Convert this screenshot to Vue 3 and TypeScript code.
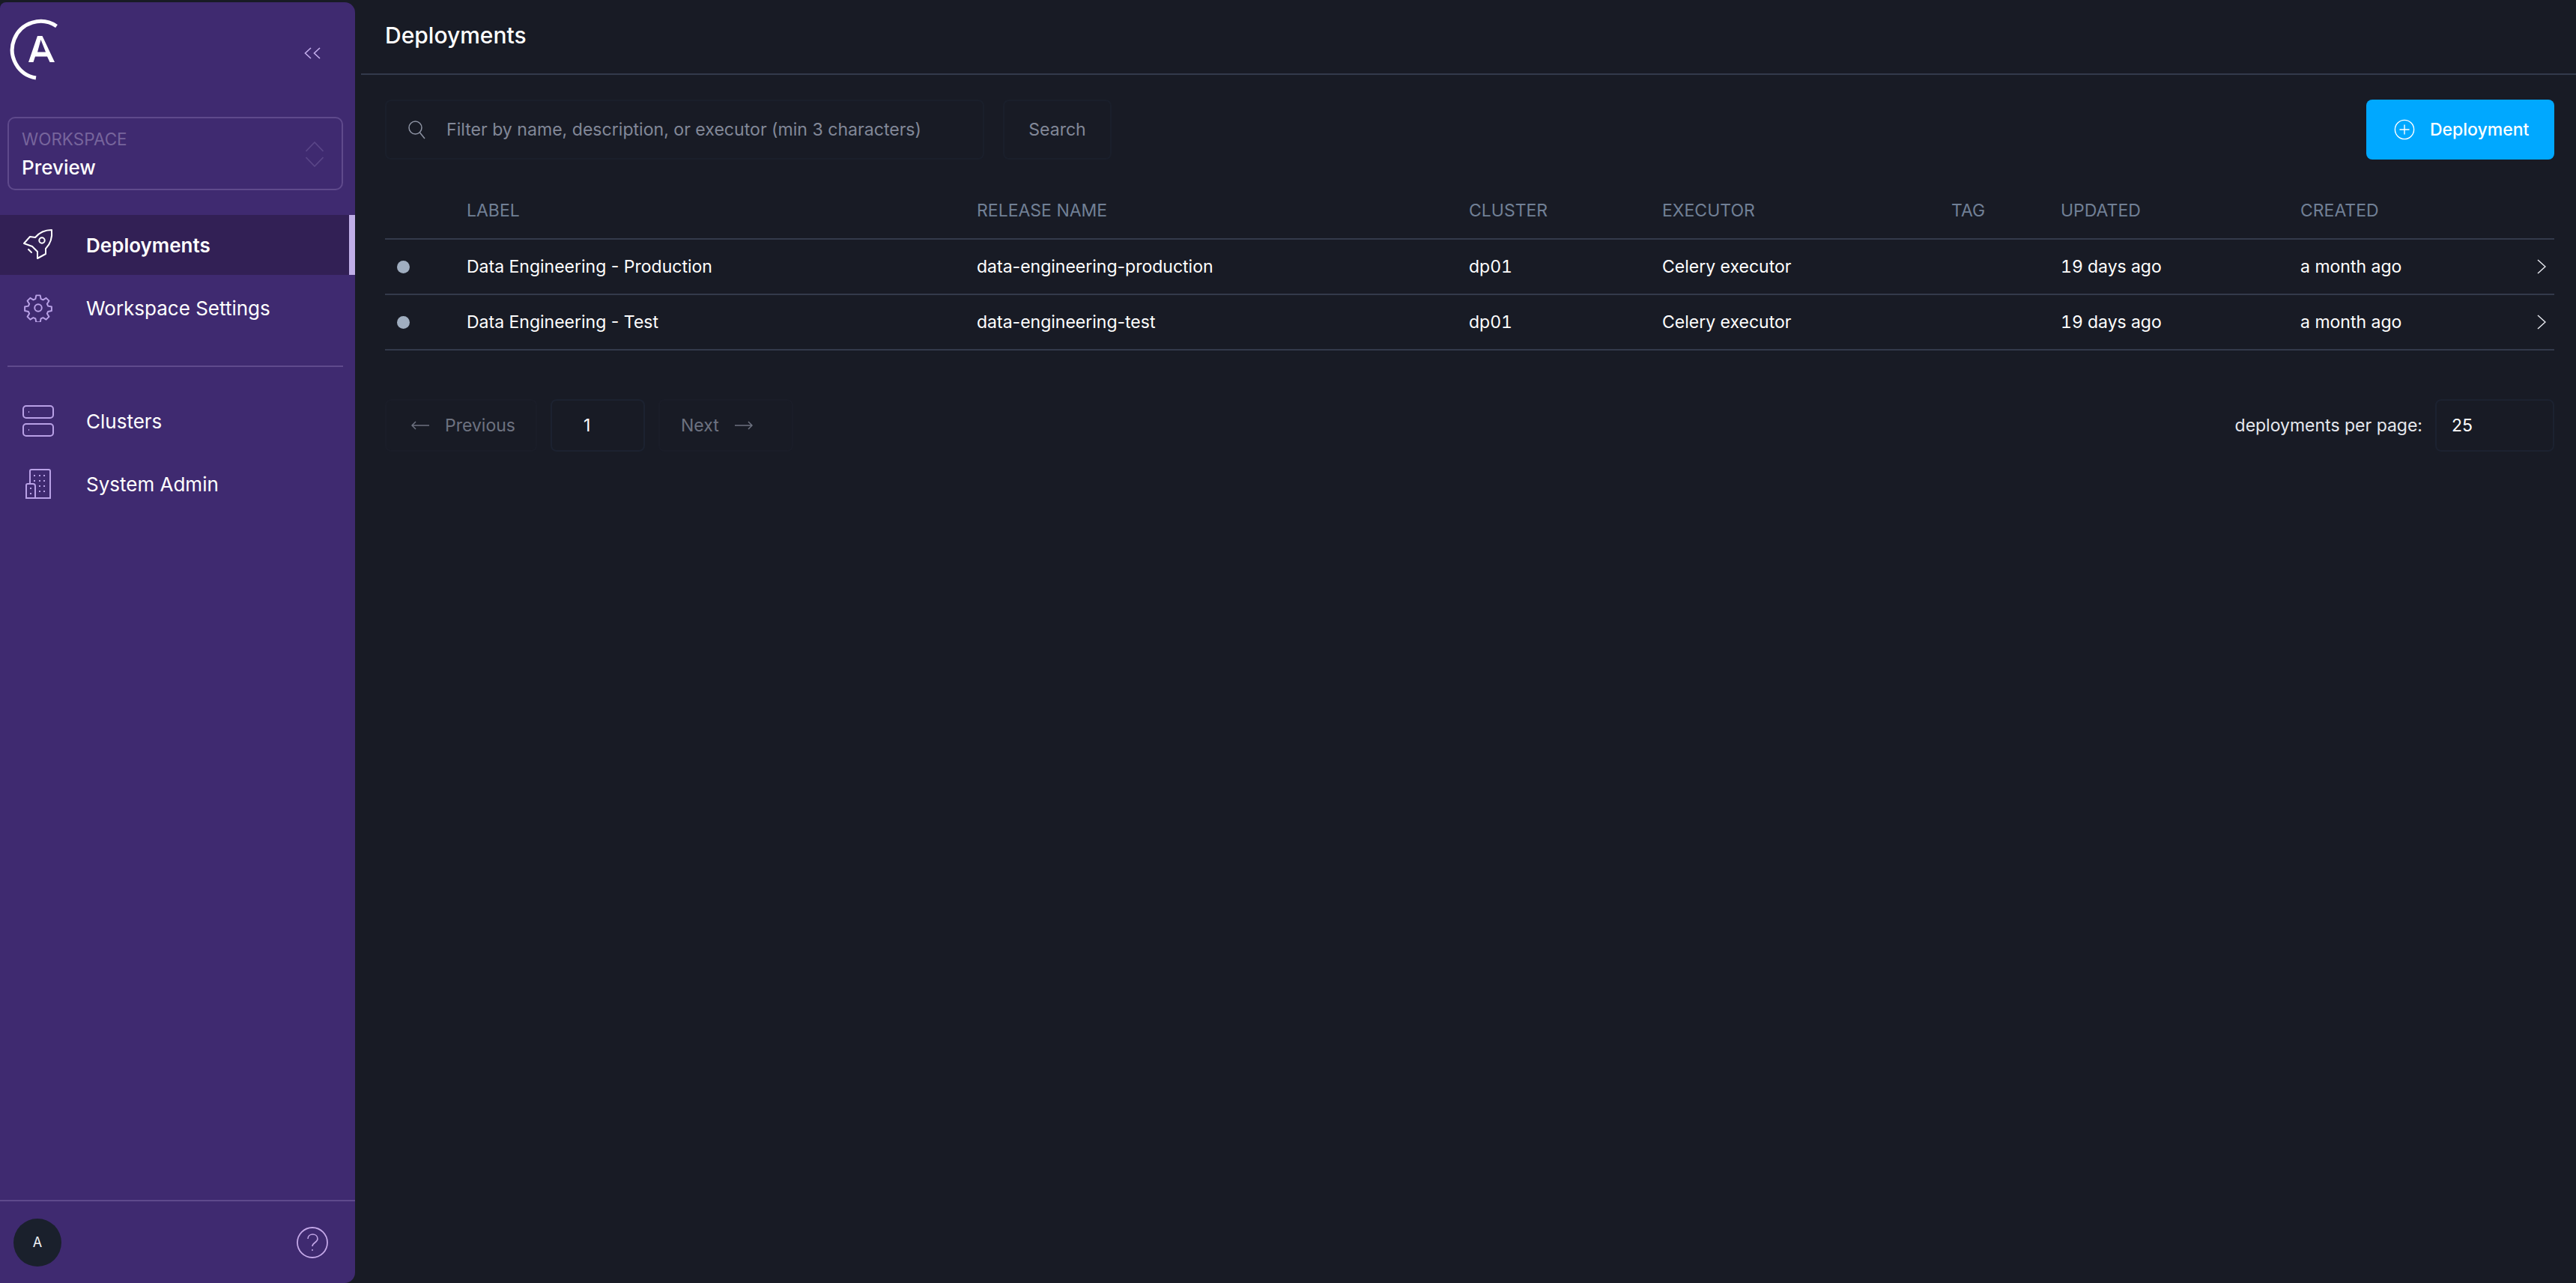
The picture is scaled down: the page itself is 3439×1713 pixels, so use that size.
<template>
  <div class="shell">
    <aside class="sidebar">
      <div class="brand">
        <svg class="logo" viewBox="0 0 90 95" fill="none">
          <path d="M65.500 15 A38 38 0 1 0 38 84" stroke="#fff" stroke-width="5" />
          <path fill-rule="evenodd" d="M28 63 L40 28 H46.500 L63 63 H56.500 L53 55.500 H37 L34.500 63 Z M40 49.500 H51 L44.500 33 Z" fill="#fff" />
        </svg>
        <svg class="collapse" viewBox="0 0 22 16" fill="none" stroke="#c4aeec" stroke-width="1.6">
          <path d="M9 1 L1.500 8 L9 15" />
          <path d="M21 1 L13.500 8 L21 15" />
        </svg>
      </div>

      <div class="workspace">
        <div>
          <div class="ws-label">WORKSPACE</div>
          <div class="ws-name">Preview</div>
        </div>
        <svg class="updown" viewBox="0 0 24 34" fill="none" stroke="#5a4688" stroke-width="1.600">
          <path d="M0.500 13 L12 1 L23.500 13" />
          <path d="M0.500 21 L12 33 L23.500 21" />
        </svg>
      </div>

      <nav class="nav">
        <a class="nav-item active">
          <span class="nav-icon">
            <svg width="50" height="50" viewBox="0 2 50 50" fill="none" stroke="#fff" stroke-width="2" stroke-linejoin="round" stroke-linecap="round">
              <path d="M43 7 C34 7 26 11 21 17 L14 16 L6 25 L17 29 L24 36 L24 45 L35 39 L35 32 C41 26 44 17 43 7 Z" />
              <circle cx="30" cy="21" r="3.700" />
              <path d="M12 33 L16 37" />
            </svg>
          </span>
          Deployments
        </a>
        <a class="nav-item">
          <span class="nav-icon">
            <svg width="38" height="38" viewBox="0 0 24 24" fill="none" stroke="#b9a1e6" stroke-width="1.250" stroke-linejoin="round">
              <circle cx="12" cy="12" r="3" />
              <path d="M10.300 1.500 h3.400 l.6 3 1.800 .8 2.600-1.600 2.400 2.400-1.600 2.600 .8 1.800 3 .6 v3.400 l-3 .6-.8 1.800 1.600 2.600-2.400 2.400-2.600-1.600-1.800 .8-.6 3 h-3.400 l-.6-3-1.800-.8-2.600 1.600-2.400-2.400 1.600-2.600-.8-1.800-3-.6 v-3.400 l3-.6 .8-1.800-1.600-2.600 2.400-2.400 2.600 1.600 1.800-.8 z" />
            </svg>
          </span>
          Workspace Settings
        </a>
      </nav>

      <div class="divider"></div>

      <nav class="nav">
        <a class="nav-item">
          <span class="nav-icon">
            <svg width="42" height="42" viewBox="0 0 42 42" fill="none" stroke="#b9a1e6" stroke-width="2">
              <rect x="1" y="1" width="40" height="16" rx="4" />
              <rect x="1" y="25" width="40" height="16" rx="4" />
              <path d="M8 9 h1 M8 33 h1" />
            </svg>
          </span>
          Clusters
        </a>
        <a class="nav-item">
          <span class="nav-icon">
            <svg width="34" height="40" viewBox="0 0 34 40" fill="none" stroke="#b9a1e6" stroke-width="2">
              <path d="M6 20 V3 Q6 1 8 1 H31 Q33 1 33 3 V39 H1 V22 Q1 20 3 20 H10 Q13 20 13 23 V39" />
              <path d="M11 9 h2 M18 9 h2 M24 9 h2 M11 16 h2 M18 16 h2 M24 16 h2 M18 23 h2 M24 23 h2 M18 30 h2 M24 30 h2 M6 26 h2 M6 33 h2" />
            </svg>
          </span>
          System Admin
        </a>
      </nav>

      <div class="sidebar-foot">
        <div class="avatar">A</div>
        <svg class="help" viewBox="0 0 42 42" fill="none" stroke="#c4a8e8" stroke-width="1.800">
          <circle cx="21" cy="21" r="20" />
          <path d="M15 16 C15 8 28 8 28 16 C28 21 21 21 21 26" stroke-width="1.600" />
          <circle cx="21" cy="31" r="1" fill="#c4a8e8" stroke="none" />
        </svg>
      </div>
    </aside>

    <main class="main">
      <header class="topbar">Deployments</header>

      <div class="content">
        <div class="toolbar">
          <div class="search-box">
            <svg width="24" height="26" viewBox="0 0 24 26" fill="none" stroke="#8d93a3" stroke-width="1.500">
              <circle cx="10.500" cy="10.500" r="8.500" />
              <path d="M16.500 17 L23 25" />
            </svg>
            <span>Filter by name, description, or executor (min 3 characters)</span>
          </div>
          <button class="search-btn">Search</button>
          <button class="add-btn">
            <svg width="28" height="28" viewBox="0 0 30 30" fill="none" stroke="#fff" stroke-width="1.500">
              <circle cx="15" cy="15" r="13.500" />
              <path d="M15 8 V22 M8 15 H22" />
            </svg>
            Deployment
          </button>
        </div>

        <table class="grid">
          <colgroup>
            <col v-for="w in colWidths" :key="w.name" :style="{ width: w.px + 'px' }" />
          </colgroup>
          <thead>
            <tr>
              <th></th>
              <th>LABEL</th>
              <th>RELEASE NAME</th>
              <th>CLUSTER</th>
              <th>EXECUTOR</th>
              <th>TAG</th>
              <th>UPDATED</th>
              <th>CREATED</th>
              <th></th>
            </tr>
          </thead>
          <tbody>
            <tr v-for="d in deployments" :key="d.release">
              <td><span class="dot"></span></td>
              <td>{{ d.label }}</td>
              <td>{{ d.release }}</td>
              <td class="num">dp01</td>
              <td>Celery executor</td>
              <td></td>
              <td class="num">19 days ago</td>
              <td>a month ago</td>
              <td class="chev-cell">
                <svg width="12" height="20" viewBox="0 0 12 20" fill="none" stroke="#e6e8ee" stroke-width="1.500">
                  <path d="M1 1 L11 10 L1 19" />
                </svg>
              </td>
            </tr>
          </tbody>
        </table>

        <div class="pager">
          <div class="pager-left">
            <button class="page-btn prev">
              <svg width="24" height="12" viewBox="0 0 24 12" fill="none" stroke="#6d7280" stroke-width="1.500">
                <path d="M24 6 H1 M6 1 L1 6 L6 11" />
              </svg>
              Previous
            </button>
            <div class="page-num">1</div>
            <button class="page-btn next">
              Next
              <svg width="24" height="12" viewBox="0 0 24 12" fill="none" stroke="#6d7280" stroke-width="1.500">
                <path d="M0 6 H23 M18 1 L23 6 L18 11" />
              </svg>
            </button>
          </div>
          <div class="pager-right">
            <span>deployments per page:</span>
            <div class="page-size">25</div>
          </div>
        </div>
      </div>
    </main>
  </div>
</template>

<script setup lang="ts">
interface Deployment {
  label: string
  release: string
}

const deployments: Deployment[] = [
  { label: 'Data Engineering - Production', release: 'data-engineering-production' },
  { label: 'Data Engineering - Test', release: 'data-engineering-test' },
]

// column starts were read off the screenshot
const colWidths = [
  { name: 'status', px: 109 },
  { name: 'label', px: 681 },
  { name: 'release', px: 657 },
  { name: 'cluster', px: 258 },
  { name: 'executor', px: 386 },
  { name: 'tag', px: 146 },
  { name: 'updated', px: 320 },
  { name: 'created', px: 304 },
  { name: 'open', px: 35 },
]
</script>

<style>
html,
body {
  margin: 0;
  background: #181b25;
}
</style>

<style scoped>
.shell {
  display: flex;
  height: 1713px;
  background: #181b25;
  font-family: Inter, "Liberation Sans", sans-serif;
  color: #fff;
  overflow: hidden;
}

.sidebar {
  width: 474px;
  flex: none;
  margin-top: 3px;
  display: flex;
  flex-direction: column;
  background: #3f2a70;
  border-radius: 8px 14px 14px 0;
}
.brand {
  height: 153px;
  box-sizing: border-box;
  padding: 17px 46px 0 10px;
  display: flex;
  justify-content: space-between;
  align-items: flex-start;
}
.logo {
  width: 90px;
  height: 95px;
}
.collapse {
  width: 22px;
  height: 16px;
  margin-top: 43px;
}
.workspace {
  margin: 0 16px 0 10px;
  height: 98px;
  box-sizing: border-box;
  border: 2px solid #5f4a8c;
  border-radius: 10px;
  padding: 0 24px 0 17px;
  display: flex;
  justify-content: space-between;
  align-items: center;
}
.ws-label {
  font-size: 22.500px;
  line-height: 30px;
  margin-top: 2px;
  color: #77659c;
}
.ws-name {
  font-size: 26px;
  line-height: 36px;
  margin-top: 5px;
  font-weight: 500;
}
.updown {
  width: 24px;
  height: 34px;
  margin-top: 2px;
}
.nav {
  display: flex;
  flex-direction: column;
  gap: 4px;
}
.workspace + .nav {
  margin-top: 33px;
}
.nav-item {
  height: 80px;
  display: flex;
  align-items: center;
  font-size: 26px;
  color: #fff;
}
.nav-item.active {
  background: #322055;
  border-right: 8px solid #c0aee8;
  font-weight: 600;
}
.nav-icon {
  width: 115px;
  flex: none;
  padding-right: 14px;
  box-sizing: border-box;
  display: flex;
  justify-content: center;
}
.divider {
  height: 2px;
  background: #5f4a8c;
  margin: 37px 16px 32px 10px;
}
.sidebar-foot {
  margin-top: auto;
  height: 111px;
  box-sizing: border-box;
  border-top: 2px solid #5f4a8c;
  padding: 0 36px 0 18px;
  display: flex;
  justify-content: space-between;
  align-items: center;
}
.avatar {
  width: 64px;
  height: 64px;
  border-radius: 50%;
  background: #1a202c;
  display: flex;
  align-items: center;
  justify-content: center;
  font-size: 18px;
  color: #edf0f5;
}
.help {
  width: 42px;
  height: 42px;
}

.main {
  flex: 1;
  margin-left: 8px;
  min-width: 0;
}
.topbar {
  height: 100px;
  box-sizing: border-box;
  border-bottom: 2px solid #333a4b;
  padding: 0 0 4px 32px;
  display: flex;
  align-items: center;
  font-size: 30px;
  font-weight: 500;
}
.content {
  padding: 33px 29px 0 32px;
}
.toolbar {
  display: flex;
  align-items: stretch;
  height: 80px;
}
.search-box {
  width: 800px;
  box-sizing: border-box;
  border: 2px solid #1a1f2b;
  border-radius: 8px;
  display: flex;
  align-items: center;
  gap: 28px;
  padding-left: 28px;
  font-size: 23.100px;
  color: #828898;
}
.search-btn {
  width: 145px;
  margin-left: 25px;
  border: 2px solid #1a1f2b;
  border-radius: 8px;
  background: none;
  font: inherit;
  font-size: 23px;
  color: #828898;
}
.add-btn {
  margin-left: auto;
  width: 251px;
  padding: 0 0 0 37px;
  border: 0;
  border-radius: 8px;
  background: #00a8ff;
  color: #fff;
  font: inherit;
  font-size: 23px;
  font-weight: 500;
  display: flex;
  align-items: center;
  gap: 20px;
}
.grid {
  width: 2896px;
  margin-top: 31px;
  table-layout: fixed;
  border-collapse: collapse;
  font-size: 23px;
}
.grid th {
  height: 74px;
  padding: 0;
  text-align: left;
  font-weight: 400;
  color: #718096;
  border-bottom: 2px solid #333a4b;
}
.grid td {
  height: 72px;
  padding: 0;
  border-bottom: 2px solid #333a4b;
}
.grid td.num {
  font-variant-numeric: tabular-nums;
}
.dot {
  display: block;
  width: 17px;
  height: 17px;
  margin-left: 16px;
  border-radius: 50%;
  background: #a0aec0;
}
.chev-cell svg {
  display: block;
  margin-left: 12px;
}
.pager {
  margin-top: 65px;
  display: flex;
  justify-content: space-between;
}
.pager-left,
.pager-right {
  display: flex;
  align-items: center;
}
.page-btn {
  height: 70px;
  border: 2px solid #1a1d28;
  border-radius: 8px;
  background: none;
  font: inherit;
  font-size: 23px;
  color: #6d7280;
  display: flex;
  align-items: center;
  gap: 21px;
}
.page-btn.prev {
  width: 203px;
  padding: 0 0 0 33px;
}
.page-btn.next {
  width: 180px;
  padding: 0 0 0 28px;
}
.page-num {
  width: 126px;
  height: 70px;
  margin: 0 18px;
  box-sizing: border-box;
  border: 2px solid #1c2230;
  border-radius: 8px;
  display: flex;
  align-items: center;
  padding-left: 42px;
  font-size: 23px;
}
.pager-right {
  font-size: 23px;
  color: #e6e8ee;
  gap: 17px;
}
.page-size {
  width: 159px;
  height: 70px;
  box-sizing: border-box;
  border: 2px solid #1c2230;
  border-radius: 8px;
  display: flex;
  align-items: center;
  padding-left: 20px;
  color: #fff;
}
</style>
